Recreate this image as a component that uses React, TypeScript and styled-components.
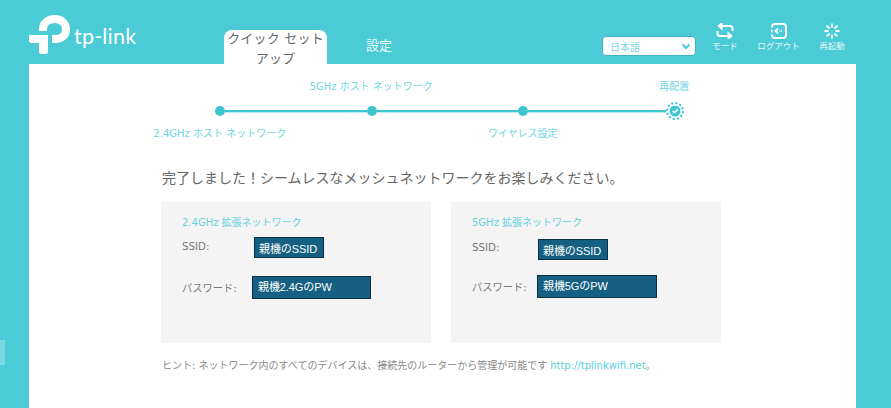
import styled, { createGlobalStyle } from "styled-components";

const TEAL = "#4acbd6";
const FONT = `"DejaVu Sans", "Noto Sans CJK JP", sans-serif`;

const GlobalStyle = createGlobalStyle`
  html, body {
    margin: 0;
    height: 100%;
    overflow: hidden;
    background: ${TEAL};
    font-family: ${FONT};
  }
`;

const Page = styled.div`
  height: 408px;
  display: flex;
  flex-direction: column;
  background: ${TEAL};
`;

const Header = styled.header`
  height: 64px;
  display: flex;
  align-items: flex-end;
  padding-left: 29px;
  flex-shrink: 0;
`;

const Logo = styled.div`
  width: 195px;
  align-self: flex-start;
  display: flex;
  align-items: flex-start;
  padding-top: 15px;
`;

const LogoWord = styled.span`
  font-family: "Lato", sans-serif;
  font-size: 21.5px;
  line-height: 24px;
  letter-spacing: 0.2px;
  color: #fff;
  margin: 9px 0 0 4px;
`;

const ActiveTab = styled.div`
  width: 103px;
  height: 34px;
  background: #fff;
  border-radius: 8px 8px 0 0;
  color: #666;
  font-size: 13px;
  line-height: 19.5px;
  letter-spacing: 0.2px;
  text-align: center;
  white-space: nowrap;
`;

const TabText = styled.div`
  margin-top: -1px;
  white-space: pre;
`;

const Tab = styled.div`
  width: 104px;
  margin-bottom: 10px;
  color: #fff;
  font-size: 13px;
  line-height: 16px;
  text-align: center;
  opacity: 0.9;
`;

const LangSelect = styled.div`
  width: 94px;
  height: 20px;
  margin: 0 0 8px 171px;
  box-sizing: border-box;
  padding: 0 4px 0 7px;
  display: flex;
  align-items: center;
  justify-content: space-between;
  background: #fff;
  border: 1px solid #3fb4c0;
  border-radius: 4px;
  color: #7fd6de;
  font-size: 10px;
`;

const HeaderActions = styled.div`
  display: flex;
  align-self: flex-start;
  margin: 23px 0 0 2.25px;
`;

const HeaderAction = styled.div`
  width: 53.5px;
  display: flex;
  flex-direction: column;
  align-items: center;
  gap: 2px;
  color: #e6f8fa;
  font-size: 8.5px;
  line-height: 11px;
  white-space: nowrap;
`;

const Main = styled.main`
  flex: 1;
  margin: 0 35px 0 29px;
  background: #fff;
  padding: 16px 0 0 132px;
  box-sizing: border-box;
`;

const SideHandle = styled.div`
  position: absolute;
  left: 0;
  top: 340px;
  width: 5px;
  height: 25px;
  background: rgba(255, 255, 255, 0.28);
`;

const StepLabels = styled.div`
  display: grid;
  grid-template-columns: repeat(4, 151.5px);
  margin-left: -17px;
  height: 14px;
`;

const StepLabel = styled.span<{ $col: number }>`
  grid-column: ${(p) => p.$col};
  justify-self: center;
  color: #6fd6df;
  font-size: 10px;
  line-height: 14px;
  white-space: nowrap;
`;

const Track = styled.div`
  display: flex;
  align-items: center;
  width: 469px;
  height: 20px;
  margin: 7px 0 6px 54px;
`;

const Dot = styled.span`
  width: 10px;
  height: 10px;
  border-radius: 50%;
  background: #3ec5d0;
  flex-shrink: 0;
`;

const TrackLine = styled.span`
  flex: 1;
  height: 2px;
  background: #3ec5d0;
  box-shadow: 0 1px 0 rgba(62, 197, 208, 0.35);
`;

const DoneIcon = styled.svg`
  flex-shrink: 0;
  margin-left: -3.5px;
`;

const Heading = styled.h2`
  margin: 27px 0 14px 1px;
  color: #666;
  font-size: 14px;
  line-height: 20px;
  font-weight: 400;
  white-space: nowrap;
`;

const Cards = styled.div`
  display: flex;
  gap: 20px;
`;

const Card = styled.section`
  width: 270px;
  height: 141px;
  box-sizing: border-box;
  padding: 14px 0 0 21px;
  background: #f4f4f4;
`;

const CardTitle = styled.h3`
  margin: 0;
  color: #66d3dd;
  font-size: 10px;
  line-height: 13px;
  font-weight: 400;
`;

const Row = styled.div<{ $top: number }>`
  display: flex;
  align-items: center;
  margin-top: ${(p) => p.$top}px;
`;

const FieldLabel = styled.span<{ $width: number; $lift?: number }>`
  width: ${(p) => p.$width}px;
  flex-shrink: 0;
  margin-top: ${(p) => p.$lift ?? 0}px;
  color: #777;
  font-size: 10.25px;
  line-height: 14px;
`;

const Redacted = styled.span<{ $width: number; $tall?: boolean }>`
  width: ${(p) => p.$width}px;
  height: ${(p) => (p.$tall ? 23 : 21)}px;
  box-sizing: border-box;
  padding: ${(p) => (p.$tall ? 2 : 3)}px 0 0 ${(p) => (p.$tall ? 5 : 4)}px;
  background: #155f82;
  border: 1px solid #0c2f45;
  color: #fff;
  font-family: "Liberation Sans", "Noto Sans CJK JP", sans-serif;
  font-size: 11px;
  letter-spacing: -0.1px;
  line-height: 17px;
  white-space: nowrap;
`;

const Hint = styled.p`
  margin: 16px 0 0 1px;
  color: #888;
  font-size: 10px;
  line-height: 14px;
  white-space: nowrap;
`;

const HintLink = styled.a`
  color: #58cfda;
  margin-left: 3px;
`;

const LogoMark = () => (
  <svg width="41" height="40" viewBox="0 0 41 40" fill="none">
    <path d="M14 16V14C14 7.5 19.5 4 26 4C32.5 4 37 8.5 37 14.5C37 20.5 32.5 24 26 24H23" stroke="#fff" strokeWidth="8" />
    <path d="M0 20H19V37C19 38.5 18 39 16 39H13C11 39 10 38.5 10 37V28H2C1 28 0 27 0 26Z" fill="#fff" />
  </svg>
);

const Chevron = () => (
  <svg width="10" height="7" viewBox="0 0 10 7" fill="none">
    <path d="M1.5 1.5L5 5L8.5 1.5" stroke="#4acbd6" strokeWidth="2" />
  </svg>
);

const ModeIcon = () => (
  <svg width="18" height="16" viewBox="0 0 18 16" fill="none" stroke="#fff" strokeWidth="2">
    <path d="M5 3H14C15.5 3 16.5 4 16.5 5.5V8" />
    <path d="M13 13H4C2.5 13 1.5 12 1.5 10.5V8" />
    <path d="M5.5 0.5L2.8 3L5.5 5.5Z" fill="#fff" />
    <path d="M12.5 10.5L15.2 13L12.5 15.5Z" fill="#fff" />
  </svg>
);

const LogoutIcon = () => (
  <svg width="16" height="16" viewBox="0 0 16 16" fill="none" stroke="#fff">
    <rect x="1" y="1" width="14" height="14" rx="3" strokeWidth="2" />
    <path d="M0 5.5H2.5V10.5H0" stroke="#4acbd6" strokeWidth="2" />
    <path d="M11 8H8" strokeWidth="1.5" strokeDasharray="1.5 1" />
    <path d="M7 5.5L4.5 8L7 10.5" strokeWidth="1.8" />
  </svg>
);

const RebootIcon = () => (
  <svg width="16" height="16" viewBox="0 0 16 16" stroke="#fff" strokeWidth="1.8">
    <path d="M8 0.5V4.5M8 11.5V15.5M0.5 8H4.5M11.5 8H15.5M2.7 2.7L5.5 5.5M10.5 10.5L13.3 13.3M13.3 2.7L10.5 5.5M5.5 10.5L2.7 13.3" />
  </svg>
);

const DoneStep = () => (
  <DoneIcon width="18" height="18" viewBox="0 0 18 18" fill="none">
    <circle cx="9" cy="9" r="9" fill="#fff" />
    <circle cx="9" cy="9" r="8" stroke="#3ec5d0" strokeWidth="2" strokeDasharray="2.2 2" />
    <circle cx="9" cy="9" r="5.5" fill="#3ec5d0" />
    <path d="M6.5 9L8.3 10.8L11.7 7.4" stroke="#fff" strokeWidth="1.5" />
  </DoneIcon>
);

const App = () => (
  <Page>
    <GlobalStyle />
    <SideHandle />
    <Header>
      <Logo>
        <LogoMark />
        <LogoWord>tp-link</LogoWord>
      </Logo>
      <ActiveTab>
        <TabText>{"クイック セット\nアップ"}</TabText>
      </ActiveTab>
      <Tab>設定</Tab>
      <LangSelect>
        日本語
        <Chevron />
      </LangSelect>
      <HeaderActions>
        <HeaderAction>
          <ModeIcon />
          モード
        </HeaderAction>
        <HeaderAction>
          <LogoutIcon />
          ログアウト
        </HeaderAction>
        <HeaderAction>
          <RebootIcon />
          再起動
        </HeaderAction>
      </HeaderActions>
    </Header>
    <Main>
      <StepLabels>
        <StepLabel $col={2}>5GHz ホスト ネットワーク</StepLabel>
        <StepLabel $col={4}>再配置</StepLabel>
      </StepLabels>
      <Track>
        <Dot />
        <TrackLine />
        <Dot />
        <TrackLine />
        <Dot />
        <TrackLine />
        <DoneStep />
      </Track>
      <StepLabels>
        <StepLabel $col={1}>2.4GHz ホスト ネットワーク</StepLabel>
        <StepLabel $col={3}>ワイヤレス設定</StepLabel>
      </StepLabels>
      <Heading>完了しました！シームレスなメッシュネットワークをお楽しみください。</Heading>
      <Cards>
        <Card>
          <CardTitle>2.4GHz 拡張ネットワーク</CardTitle>
          <Row $top={8}>
            <FieldLabel $width={72} $lift={-3}>SSID:</FieldLabel>
            <Redacted $width={70}>親機のSSID</Redacted>
          </Row>
          <Row $top={18}>
            <FieldLabel $width={70}>パスワード:</FieldLabel>
            <Redacted $width={119} $tall>親機2.4GのPW</Redacted>
          </Row>
        </Card>
        <Card>
          <CardTitle>5GHz 拡張ネットワーク</CardTitle>
          <Row $top={10}>
            <FieldLabel $width={66} $lift={-6}>SSID:</FieldLabel>
            <Redacted $width={70}>親機のSSID</Redacted>
          </Row>
          <Row $top={15}>
            <FieldLabel $width={65}>パスワード:</FieldLabel>
            <Redacted $width={120} $tall>親機5GのPW</Redacted>
          </Row>
        </Card>
      </Cards>
      <Hint>
        ヒント: ネットワーク内のすべてのデバイスは、接続先のルーターから管理が可能です
        <HintLink>http://tplinkwifi.net</HintLink>。
      </Hint>
    </Main>
  </Page>
);

export default App;
